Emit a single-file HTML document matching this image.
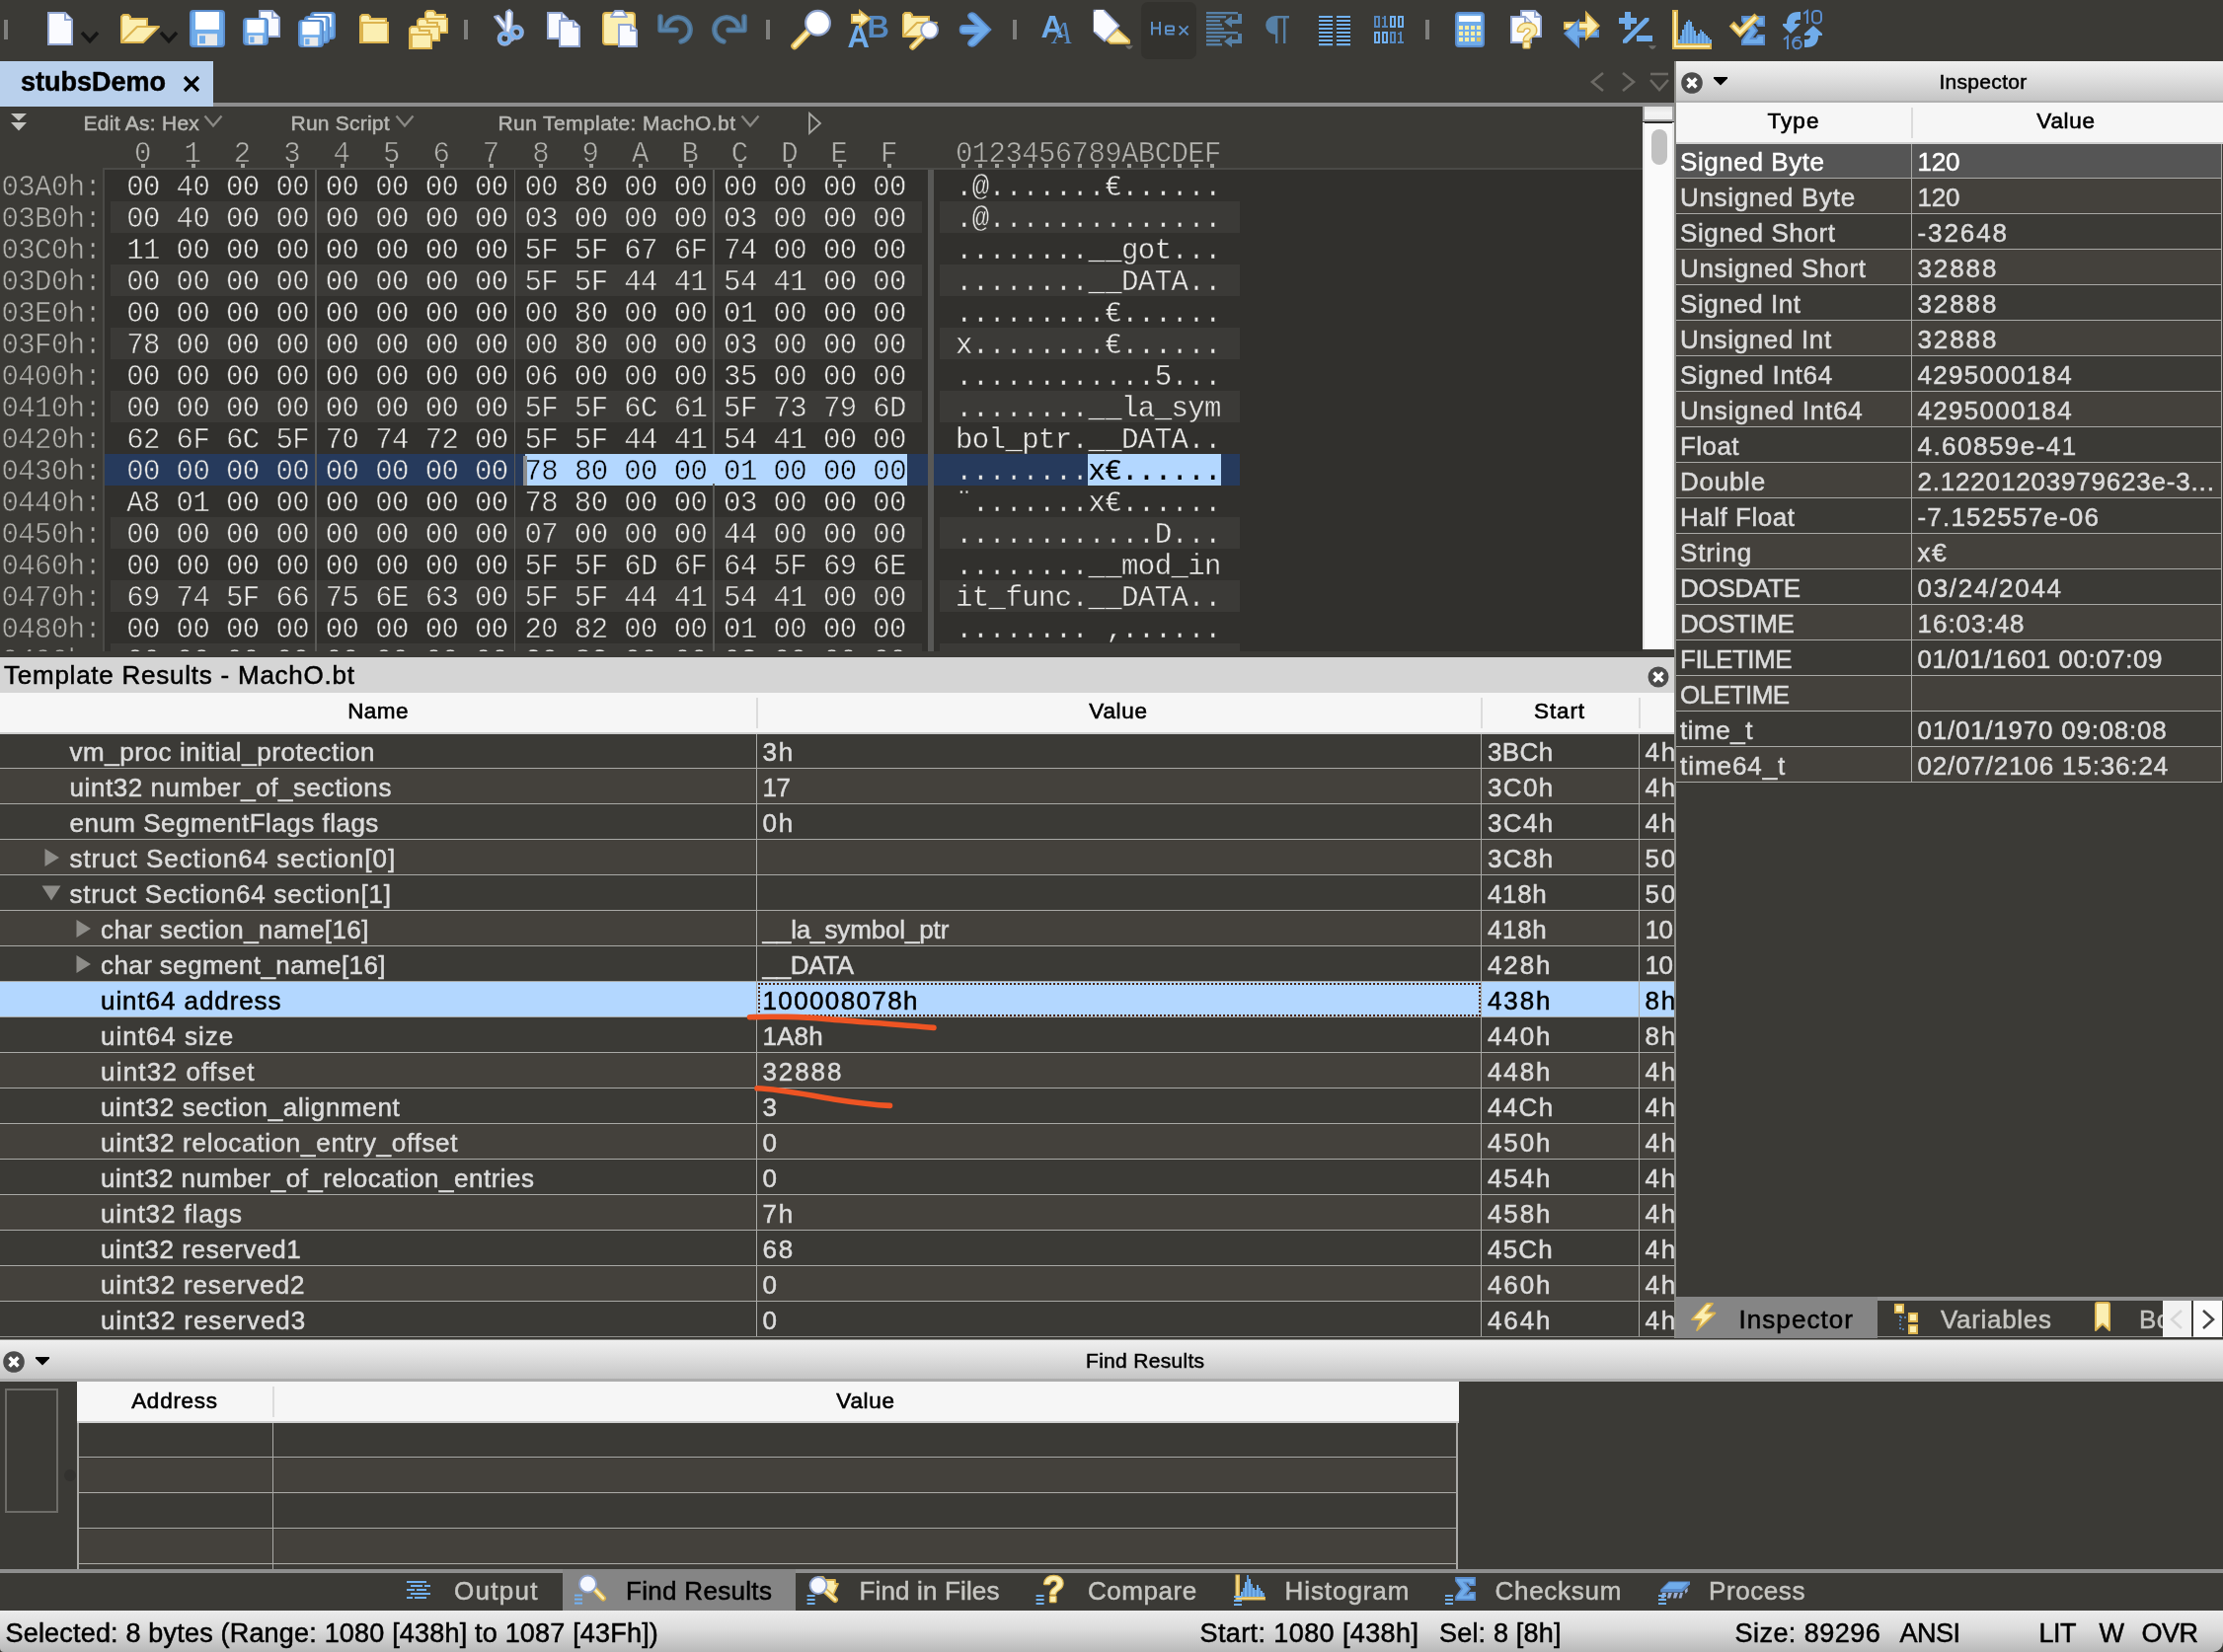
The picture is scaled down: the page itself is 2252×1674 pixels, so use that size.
<!DOCTYPE html><html><head><meta charset="utf-8"><title>010 Editor</title><style>
html,body{margin:0;padding:0}
html{width:2252px;height:1674px;overflow:hidden}
body{width:2252px;height:1674px;background:#3b3a36;overflow:hidden;position:relative;font-family:"Liberation Sans",sans-serif;font-size:26px;color:#dcdcdc}
div,span,svg{position:absolute;box-sizing:border-box}
.t{white-space:nowrap;letter-spacing:.5px;-webkit-text-stroke:.5px currentColor}
.v{letter-spacing:1.15px}
.m{font-family:"Liberation Mono",monospace;font-size:29px;letter-spacing:-.6px;white-space:pre;line-height:37px;height:32px}
.hx{color:#e8e8e6}
.ad{color:#b2b2ae}
.row{left:0;height:36px;line-height:36px}
.row .t{top:1px}
.ln{background:#a9a9a6}
.hd{background:#f6f6f6;color:#000}
.gr{background:linear-gradient(#efefef,#e2e2e2 35%,#c4c4c4)}
</style></head><body>
<div id="root" style="left:0;top:0;width:2252px;height:1674px;overflow:hidden;will-change:transform">
<svg style="left:0;top:0" width="2252" height="62" viewBox="0 0 2252 62">
<rect x="4" y="20" width="4" height="20" fill="#7f7f7d"/>
<path d="M49 13H66L73 20V45H49Z" fill="#fafbff" stroke="#93a7d2" stroke-width="2"/>
<path d="M66 13V20H73" fill="#eef1fa" stroke="#93a7d2" stroke-width="2"/>
<path d="M83 33L91 41.5L99 33" fill="none" stroke="#141414" stroke-width="3.6"/>
<path d="M123 43V17L125 15H130L132 17V19H149V27" fill="#fbefb2" stroke="#dcb44f" stroke-width="2"/>
<path d="M123 43L139 27H161L145 43Z" fill="#fbefb2" stroke="#dcb44f" stroke-width="2" stroke-linejoin="round"/>
<path d="M163 33L171 41.5L179 33" fill="none" stroke="#141414" stroke-width="3.6"/>
<rect x="193" y="11" width="34" height="36" rx="3" fill="#70acea" stroke="#5a8ccc" stroke-width="2"/>
<rect x="198.0" y="12" width="24.0" height="17.9" fill="#fff"/>
<rect x="200.0" y="34.3" width="20.0" height="11.8" fill="#e9e9e9"/>
<rect x="202.0" y="36.2" width="6.0" height="8.0" fill="#70acea"/>
<path d="M263 11H276L283 18V37H263Z" fill="#fafbff" stroke="#93a7d2" stroke-width="2"/>
<path d="M276 11V18H283" fill="#eef1fa" stroke="#93a7d2" stroke-width="2"/>
<rect x="247" y="19" width="24" height="26" rx="3" fill="#70acea" stroke="#5a8ccc" stroke-width="2"/>
<rect x="250.3" y="20" width="17.3" height="13.2" fill="#fff"/>
<rect x="251.8" y="35.9" width="14.4" height="8.7" fill="#e9e9e9"/>
<rect x="253.2" y="37.3" width="4.3" height="5.9" fill="#70acea"/>
<rect x="315" y="13" width="24" height="26" rx="3" fill="#70acea" stroke="#5a8ccc" stroke-width="2"/>
<rect x="318.3" y="14" width="17.3" height="13.2" fill="#fff"/>
<rect x="319.8" y="29.9" width="14.4" height="8.7" fill="#e9e9e9"/>
<rect x="321.2" y="31.3" width="4.3" height="5.9" fill="#70acea"/>
<rect x="309" y="17" width="24" height="26" rx="3" fill="#70acea" stroke="#5a8ccc" stroke-width="2"/>
<rect x="312.3" y="18" width="17.3" height="13.2" fill="#fff"/>
<rect x="313.8" y="33.9" width="14.4" height="8.7" fill="#e9e9e9"/>
<rect x="315.2" y="35.3" width="4.3" height="5.9" fill="#70acea"/>
<rect x="303" y="21" width="24" height="26" rx="3" fill="#70acea" stroke="#5a8ccc" stroke-width="2"/>
<rect x="306.3" y="22" width="17.3" height="13.2" fill="#fff"/>
<rect x="307.8" y="37.9" width="14.4" height="8.7" fill="#e9e9e9"/>
<rect x="309.2" y="39.3" width="4.3" height="5.9" fill="#70acea"/>
<path d="M365 43V17L367 15H373L375 17V19H391V23H393V43Z" fill="#fbefb2" stroke="#dcb44f" stroke-width="2"/>
<path d="M367 43V23H391" fill="none" stroke="#dcb44f" stroke-width="2"/>
<path d="M431 33V13L433 11H439L441 13V15H451V19H453V33Z" fill="#fbefb2" stroke="#dcb44f" stroke-width="2"/>
<path d="M433 33V19H451" fill="none" stroke="#dcb44f" stroke-width="2"/>
<path d="M423 41V21L425 19H431L433 21V23H443V27H445V41Z" fill="#fbefb2" stroke="#dcb44f" stroke-width="2"/>
<path d="M425 41V27H443" fill="none" stroke="#dcb44f" stroke-width="2"/>
<path d="M415 49V29L417 27H423L425 29V31H435V35H437V49Z" fill="#fbefb2" stroke="#dcb44f" stroke-width="2"/>
<path d="M417 49V35H435" fill="none" stroke="#dcb44f" stroke-width="2"/>
<rect x="470" y="20" width="4" height="20" fill="#7f7f7d"/>
<path d="M501 17L505 16L523 37L519 41Z" fill="#f6f8fd" stroke="#9aaed6" stroke-width="2" stroke-linejoin="round"/>
<path d="M513 12L516 10L519 13L518 35L512 36Z" fill="#f6f8fd" stroke="#9aaed6" stroke-width="2" stroke-linejoin="round"/>
<circle cx="511.3" cy="39" r="5.3" fill="none" stroke="#9aaed6" stroke-width="4.8"/><circle cx="511.3" cy="39" r="5.1" fill="none" stroke="#72b2f4" stroke-width="2.2"/>
<circle cx="523.2" cy="32.8" r="5.3" fill="none" stroke="#9aaed6" stroke-width="4.8"/><circle cx="523.2" cy="32.8" r="5.1" fill="none" stroke="#72b2f4" stroke-width="2.2"/>
<path d="M555 13H569L575 19V39H555Z" fill="#fafbff" stroke="#93a7d2" stroke-width="2"/>
<path d="M569 13V19H575" fill="#eef1fa" stroke="#93a7d2" stroke-width="2"/>
<path d="M567 21H581L587 27V47H567Z" fill="#fafbff" stroke="#93a7d2" stroke-width="2"/>
<path d="M581 21V27H587" fill="#eef1fa" stroke="#93a7d2" stroke-width="2"/>
<rect x="611" y="13" width="32" height="32" rx="3" fill="#fbefb2" stroke="#dcb44f" stroke-width="2"/>
<path d="M619 17L623 11H631L635 17Z" fill="#fafbff" stroke="#93a7d2" stroke-width="2" stroke-linejoin="round"/>
<path d="M627 25H639L645 31V47H627Z" fill="#fafbff" stroke="#93a7d2" stroke-width="2"/>
<path d="M639 25V31H645" fill="#eef1fa" stroke="#93a7d2" stroke-width="2"/>
<g fill="none" stroke="#4f7698" stroke-width="5.4" stroke-linecap="round" stroke-linejoin="round"><path d="M669 17V30.5H685"/><path d="M675 27A12.3 12.3 0 1 1 690 42"/></g>
<g fill="none" stroke="#5b86ad" stroke-width="2" stroke-linecap="round" stroke-linejoin="round"><path d="M669 17V30.5H685"/><path d="M675 27A12.3 12.3 0 1 1 690 42"/></g>
<g transform="translate(1479 0) scale(-1 1)" fill="none" stroke="#4f7698" stroke-width="5.4" stroke-linecap="round" stroke-linejoin="round"><path d="M725 17V30.5H741"/><path d="M731 27A12.3 12.3 0 1 1 746 42"/></g>
<g transform="translate(1479 0) scale(-1 1)" fill="none" stroke="#5b86ad" stroke-width="2" stroke-linecap="round" stroke-linejoin="round"><path d="M725 17V30.5H741"/><path d="M731 27A12.3 12.3 0 1 1 746 42"/></g>
<rect x="776" y="20" width="4" height="20" fill="#7f7f7d"/>
<path d="M818 33L805 46.5" stroke="#dcb44f" stroke-width="7.5" stroke-linecap="round"/><path d="M818 33L805 46.5" stroke="#fbefb2" stroke-width="3.6" stroke-linecap="round"/>
<circle cx="828.5" cy="23.3" r="12.4" fill="#fff" stroke="#8fa3cc" stroke-width="2.2"/>
<text x="878.5" y="37.5" font-family="Liberation Sans" font-weight="bold" font-size="31" fill="#5588c0">B</text>
<text x="858.5" y="48" font-family="Liberation Sans" font-weight="bold" font-size="31" fill="#70acea">A</text>
<path d="M863 15H871V11L881 19L871 27V23H863Z" fill="#fbefb2" stroke="#dcb44f" stroke-width="2" stroke-linejoin="miter"/>
<path d="M915 37V15L917 13H922L924 15V17H941V23" fill="#fbefb2" stroke="#dcb44f" stroke-width="2"/>
<path d="M915 37L929 23H949L935 37Z" fill="#fbefb2" stroke="#dcb44f" stroke-width="2" stroke-linejoin="round"/>
<path d="M934 38L924.5 47.5" stroke="#dcb44f" stroke-width="6.5" stroke-linecap="round"/><path d="M934 38L924.5 47.5" stroke="#fbefb2" stroke-width="2.8" stroke-linecap="round"/>
<circle cx="941.6" cy="30.4" r="8.4" fill="#fafbff" stroke="#8fa3cc" stroke-width="2"/>
<path d="M976 26H990L982 18.5Q979.5 15 983 13.5Q986 12.5 988.5 15L1003.5 30L988.5 45Q986 47.5 983 46.5Q979.5 45 982 41.5L990 34H976Q972.6 34 972.6 30Q972.6 26 976 26Z" fill="#70acea" stroke="#5a8ccc" stroke-width="1.8"/>
<rect x="1026" y="20" width="4" height="20" fill="#7f7f7d"/>
<text x="1054.6" y="37.8" font-family="Liberation Sans" font-weight="bold" font-size="32" fill="#70acea">A</text>
<text x="1066.5" y="43.7" font-family="Liberation Serif" font-style="italic" font-size="31" fill="#5588c0">A</text>
<path d="M1132 30L1144 41V43.7H1125L1121 40Z" fill="#fbefb2" stroke="#dcb44f" stroke-width="2" stroke-linejoin="round"/>
<path d="M1108.5 10.6H1118.5L1133.5 26L1119 41.5L1108.5 32Z" fill="#fafbff" stroke="#9aabd6" stroke-width="1.8"/>
<path d="M1108 10H1118V12H1108Z M1108 10V32H1110V10Z" fill="#fafbff"/>
<path d="M1140 46.2H1148L1146 49L1144 50L1142 49Z" fill="#6c6c6a"/>
<rect x="1156" y="2" width="56" height="58" rx="7" fill="#33322e"/>
<g fill="none" stroke="#5d90c8" stroke-width="2"><path d="M1167 22V35.6M1175 22V35.6M1167 28.6H1175"/><path d="M1181 31H1189V27.6Q1189 26.6 1188 26.6H1182Q1181 26.6 1181 27.6V33.6Q1181 34.6 1182 34.6H1189.5"/><path d="M1194.6 26.4L1203.6 35.4M1203.6 26.4L1194.6 35.4"/></g>
<g fill="#5680a6">
<rect x="1222" y="12" width="32" height="2.4"/>
<rect x="1222" y="16" width="20" height="2.4"/>
<rect x="1222" y="20" width="14" height="2.4"/>
<rect x="1222" y="24" width="16" height="2.4"/>
<rect x="1222" y="28" width="18" height="2.4"/>
<rect x="1222" y="32" width="32" height="2.4"/>
<rect x="1222" y="36" width="20" height="2.4"/>
<rect x="1222" y="40" width="14" height="2.4"/>
<rect x="1222" y="44" width="16" height="2.4"/>
<path d="M1254 14H1258V24H1248V28L1240 22L1248 16V20H1254Z"/>
<path d="M1254 34H1258V44H1248V48L1240 42L1248 36V40H1254Z"/>
</g>
<path d="M1292 16H1306V18.4H1302.4V44H1300V18.4H1294.4V44H1292V35A9.8 9.5 0 0 1 1292 16Z" fill="#5680a6"/>
<g fill="#72b2f4">
<rect x="1336" y="16" width="14" height="2.2"/><rect x="1354" y="16" width="14" height="2.2"/>
<rect x="1336" y="20" width="14" height="2.2"/><rect x="1354" y="20" width="14" height="2.2"/>
<rect x="1336" y="24" width="14" height="2.2"/><rect x="1354" y="24" width="14" height="2.2"/>
<rect x="1336" y="28" width="14" height="2.2"/><rect x="1354" y="28" width="14" height="2.2"/>
<rect x="1336" y="32" width="14" height="2.2"/><rect x="1354" y="32" width="14" height="2.2"/>
<rect x="1336" y="36" width="14" height="2.2"/><rect x="1354" y="36" width="14" height="2.2"/>
<rect x="1336" y="40" width="14" height="2.2"/><rect x="1354" y="40" width="14" height="2.2"/>
<rect x="1336" y="44" width="14" height="2.2"/><rect x="1354" y="44" width="14" height="2.2"/>
</g>
<g fill="#2b2622">
<rect x="1336" y="18.2" width="14" height="1.8"/><rect x="1354" y="18.2" width="14" height="1.8"/>
<rect x="1336" y="22.2" width="14" height="1.8"/><rect x="1354" y="22.2" width="14" height="1.8"/>
<rect x="1336" y="26.2" width="14" height="1.8"/><rect x="1354" y="26.2" width="14" height="1.8"/>
<rect x="1336" y="30.2" width="14" height="1.8"/><rect x="1354" y="30.2" width="14" height="1.8"/>
<rect x="1336" y="34.2" width="14" height="1.8"/><rect x="1354" y="34.2" width="14" height="1.8"/>
<rect x="1336" y="38.2" width="14" height="1.8"/><rect x="1354" y="38.2" width="14" height="1.8"/>
<rect x="1336" y="42.2" width="14" height="1.8"/><rect x="1354" y="42.2" width="14" height="1.8"/>
</g>
<rect x="1393" y="17" width="4" height="10" fill="none" stroke="#5588c0" stroke-width="2"/>
<path d="M1402 16H1404V26H1406V28H1400V26H1402V19H1400V17.5H1402Z" fill="#5588c0"/>
<rect x="1409" y="17" width="4" height="10" fill="none" stroke="#72b2f4" stroke-width="2"/>
<rect x="1417" y="17" width="4" height="10" fill="none" stroke="#72b2f4" stroke-width="2"/>
<rect x="1393" y="33" width="4" height="10" fill="none" stroke="#72b2f4" stroke-width="2"/>
<rect x="1401" y="33" width="4" height="10" fill="none" stroke="#72b2f4" stroke-width="2"/>
<rect x="1409" y="33" width="4" height="10" fill="none" stroke="#5588c0" stroke-width="2"/>
<path d="M1418 32H1420V42H1422V44H1416V42H1418V35H1416V33.5H1418Z" fill="#5588c0"/>
<rect x="1444" y="20" width="4" height="20" fill="#7f7f7d"/>
<rect x="1475" y="13" width="28" height="34" rx="3" fill="#70acea" stroke="#5a8ccc" stroke-width="2"/>
<rect x="1478" y="16" width="22" height="6" fill="#fff"/>
<rect x="1478" y="26" width="4" height="4" fill="#fbeea4"/>
<rect x="1484" y="26" width="4" height="4" fill="#fbeea4"/>
<rect x="1490" y="26" width="4" height="4" fill="#fbeea4"/>
<rect x="1496" y="26" width="4" height="4" fill="#fbeea4"/>
<rect x="1478" y="32" width="4" height="4" fill="#fbeea4"/>
<rect x="1484" y="32" width="4" height="4" fill="#fbeea4"/>
<rect x="1490" y="32" width="4" height="4" fill="#fbeea4"/>
<rect x="1496" y="32" width="4" height="4" fill="#fbeea4"/>
<rect x="1478" y="38" width="4" height="4" fill="#fbeea4"/>
<rect x="1484" y="38" width="4" height="4" fill="#fbeea4"/>
<rect x="1490" y="38" width="4" height="4" fill="#fbeea4"/>
<rect x="1496" y="38" width="4" height="4" fill="#d9c26a"/>
<path d="M1541 11H1555L1561 17V37H1541Z" fill="#fafbff" stroke="#93a7d2" stroke-width="2"/>
<path d="M1555 11V17H1561" fill="#eef1fa" stroke="#93a7d2" stroke-width="2"/>
<path d="M1531 17H1545L1551 23V43H1531Z" fill="#fafbff" stroke="#93a7d2" stroke-width="2"/>
<path d="M1545 17V23H1551" fill="#eef1fa" stroke="#93a7d2" stroke-width="2"/>
<text x="1536.4" y="48.2" font-family="Liberation Sans" font-weight="bold" font-size="35" fill="#dcb44f" stroke="#dcb44f" stroke-width="3.2" stroke-linejoin="round">?</text>
<text x="1536.4" y="48.2" font-family="Liberation Sans" font-weight="bold" font-size="35" fill="#fbefb2" stroke="#fbefb2" stroke-width="0.3">?</text>
<path d="M1585 23H1607V29H1585Z" fill="#fbefb2" stroke="#dcb44f" stroke-width="2" stroke-linejoin="miter"/>
<path d="M1599 31V21L1585.4 34L1599 47V37H1619V31Z" fill="#70acea" stroke="#5a8ccc" stroke-width="2" stroke-linejoin="miter"/>
<path d="M1600 23H1607V13L1619.6 26L1607 39V29H1600Z" fill="#fbefb2"/><path d="M1600 23H1607V13L1619.6 26L1607 39V29H1600" fill="none" stroke="#dcb44f" stroke-width="2" stroke-linejoin="miter"/>
<path d="M1646 12H1652V18H1658V24H1652V30H1646V24H1640V18H1646Z M1658 36H1674V42H1658Z M1666.5 18H1670.5V21L1648 43.7H1644V40.5Z" fill="#70acea"/>
<path d="M1670 46.2H1678L1676 49L1674 50L1672 49Z" fill="#6c6c6a"/>
<rect x="1700" y="40" width="2" height="4" fill="#74b2ee"/>
<rect x="1702" y="36" width="2" height="8" fill="#5e97d6"/>
<rect x="1704" y="30" width="2" height="14" fill="#74b2ee"/>
<rect x="1706" y="25" width="2" height="19" fill="#5e97d6"/>
<rect x="1708" y="22" width="2" height="22" fill="#74b2ee"/>
<rect x="1710" y="20" width="2" height="24" fill="#5e97d6"/>
<rect x="1712" y="22" width="2" height="22" fill="#74b2ee"/>
<rect x="1714" y="27" width="2" height="17" fill="#5e97d6"/>
<rect x="1716" y="31" width="2" height="13" fill="#74b2ee"/>
<rect x="1718" y="36" width="2" height="8" fill="#5e97d6"/>
<rect x="1720" y="34" width="2" height="10" fill="#74b2ee"/>
<rect x="1722" y="30" width="2" height="14" fill="#5e97d6"/>
<rect x="1724" y="32" width="2" height="12" fill="#74b2ee"/>
<rect x="1726" y="34" width="2" height="10" fill="#5e97d6"/>
<rect x="1728" y="36" width="2" height="8" fill="#74b2ee"/>
<rect x="1730" y="38" width="2" height="6" fill="#5e97d6"/>
<rect x="1732" y="40" width="2" height="4" fill="#74b2ee"/>
<path d="M1695 11H1699V45H1733V49H1695Z" fill="#fbefb2" stroke="#dcb44f" stroke-width="2"/>
<path d="M1765 17H1787V26H1781L1779 23H1774L1780 31L1774 39H1779L1781 36H1787V45H1765V41L1772 31L1765 21Z" fill="#70acea" stroke="#5a8ccc" stroke-width="2" stroke-linejoin="miter"/>
<path d="M1753 26.6L1756.6 23L1762.6 29.4L1777.4 14.8L1781 18.4L1762.6 36.6Z" fill="#fbefb2" stroke="#dcb44f" stroke-width="2" stroke-linejoin="miter"/>
<path d="M1824 12V20H1822Q1818 20 1818 24H1824L1814 34L1806 26V24H1810Q1810 12 1822 12Z" fill="#70acea"/>
<path d="M1828 48V40H1830Q1834 40 1834 36H1828V34L1837 26L1846 34V36H1842Q1842 48 1830 48Z" fill="#70acea"/>
<g fill="none" stroke="#5a8ccc" stroke-width="2"><path d="M1827 14L1831 11V24"/><rect x="1836" y="11" width="9" height="12.4" rx="3.6"/><path d="M1807 40L1811 37V50"/><path d="M1824 38Q1816 36.6 1816 44.5"/><circle cx="1820.6" cy="45" r="4.2"/></g>
</svg>

<div style="left:0;top:104px;width:1696px;height:4px;background:#8e8e8e"></div>
<div style="left:0;top:62px;width:216px;height:46px;background:#b9d0ec"></div>
<div class="t" style="left:21px;top:66px;font-weight:bold;font-size:27px;color:#000;line-height:34px;letter-spacing:0">stubsDemo</div>
<svg style="left:185px;top:76px" width="18" height="18" viewBox="0 0 18 18"><path d="M2 2L16 16M16 2L2 16" stroke="#000" stroke-width="3.2"/></svg>
<svg style="left:1608px;top:72px" width="90" height="24" viewBox="0 0 90 24"><g fill="none" stroke="#6c6a65" stroke-width="2.6"><path d="M16 2L5 11L16 20"/><path d="M36 2L47 11L36 20"/><path d="M64 3H82"/><path d="M64 9L73 19L82 9"/></g></svg>
<svg style="left:10px;top:114px" width="18" height="20" viewBox="0 0 18 20"><path d="M1 1H17L9 8.5Z M1 10H17L9 18.5Z" fill="#c4c4c0"/></svg>
<div class="t" style="left:84.5px;top:109px;line-height:32px;font-size:21px;color:#b8b8b4;letter-spacing:0.27px;">Edit As: Hex</div>
<svg style="left:205.5px;top:116px" width="20" height="14" viewBox="0 0 20 14"><path d="M1.5 1.5L10 11.5L18.5 1.5" fill="none" stroke="#8a8985" stroke-width="2.4"/></svg>
<div class="t" style="left:294.5px;top:109px;line-height:32px;font-size:21px;color:#b8b8b4;letter-spacing:0.23px;">Run Script</div>
<svg style="left:399.5px;top:116px" width="20" height="14" viewBox="0 0 20 14"><path d="M1.5 1.5L10 11.5L18.5 1.5" fill="none" stroke="#8a8985" stroke-width="2.4"/></svg>
<div class="t" style="left:504.5px;top:109px;line-height:32px;font-size:21px;color:#b8b8b4;letter-spacing:0.41px;">Run Template: MachO.bt</div>
<svg style="left:749.5px;top:116px" width="20" height="14" viewBox="0 0 20 14"><path d="M1.5 1.5L10 11.5L18.5 1.5" fill="none" stroke="#8a8985" stroke-width="2.4"/></svg>
<svg style="left:818px;top:113px" width="16" height="24" viewBox="0 0 16 24"><path d="M2 2L13 12L2 22Z" fill="none" stroke="#a8a8a4" stroke-width="1.8"/></svg>
<div id="hexwrap" style="left:0;top:140px;width:1664px;height:520px;overflow:hidden">
<div class="m ad" style="left:136.0px;top:-2px;-webkit-text-stroke:.55px #3b3a36">0</div>
<div class="m ad" style="left:186.4px;top:-2px;-webkit-text-stroke:.55px #3b3a36">1</div>
<div class="m ad" style="left:236.8px;top:-2px;-webkit-text-stroke:.55px #3b3a36">2</div>
<div class="m ad" style="left:287.2px;top:-2px;-webkit-text-stroke:.55px #3b3a36">3</div>
<div class="m ad" style="left:337.6px;top:-2px;-webkit-text-stroke:.55px #3b3a36">4</div>
<div class="m ad" style="left:388.0px;top:-2px;-webkit-text-stroke:.55px #3b3a36">5</div>
<div class="m ad" style="left:438.4px;top:-2px;-webkit-text-stroke:.55px #3b3a36">6</div>
<div class="m ad" style="left:488.8px;top:-2px;-webkit-text-stroke:.55px #3b3a36">7</div>
<div class="m ad" style="left:539.2px;top:-2px;-webkit-text-stroke:.55px #3b3a36">8</div>
<div class="m ad" style="left:589.6px;top:-2px;-webkit-text-stroke:.55px #3b3a36">9</div>
<div class="m ad" style="left:640.0px;top:-2px;-webkit-text-stroke:.55px #3b3a36">A</div>
<div class="m ad" style="left:690.4px;top:-2px;-webkit-text-stroke:.55px #3b3a36">B</div>
<div class="m ad" style="left:740.8px;top:-2px;-webkit-text-stroke:.55px #3b3a36">C</div>
<div class="m ad" style="left:791.2px;top:-2px;-webkit-text-stroke:.55px #3b3a36">D</div>
<div class="m ad" style="left:841.6px;top:-2px;-webkit-text-stroke:.55px #3b3a36">E</div>
<div class="m ad" style="left:892.0px;top:-2px;-webkit-text-stroke:.55px #3b3a36">F</div>
<div class="m ad" style="left:968px;top:-2px;-webkit-text-stroke:.55px #3b3a36">0123456789ABCDEF</div>
<div style="left:104px;top:32px;width:1560px;height:488px;background:#31302d"></div>
<div style="left:104px;top:29.5px;width:1560px;height:2.5px;background:#4a4a47"></div>
<div style="left:103.5px;top:30px;width:2.2px;height:490px;background:#4a4a47"></div>
<div style="left:143.2px;top:26px;width:4px;height:4px;background:#a4a4a0"></div>
<div style="left:974.4px;top:26px;width:4px;height:4px;background:#a4a4a0"></div>
<div style="left:193.6px;top:26px;width:4px;height:4px;background:#a4a4a0"></div>
<div style="left:991.2px;top:26px;width:4px;height:4px;background:#a4a4a0"></div>
<div style="left:244.0px;top:26px;width:4px;height:4px;background:#a4a4a0"></div>
<div style="left:1008.0px;top:26px;width:4px;height:4px;background:#a4a4a0"></div>
<div style="left:294.4px;top:26px;width:4px;height:4px;background:#a4a4a0"></div>
<div style="left:1024.8px;top:26px;width:4px;height:4px;background:#a4a4a0"></div>
<div style="left:344.8px;top:26px;width:4px;height:4px;background:#a4a4a0"></div>
<div style="left:1041.6px;top:26px;width:4px;height:4px;background:#a4a4a0"></div>
<div style="left:395.2px;top:26px;width:4px;height:4px;background:#a4a4a0"></div>
<div style="left:1058.4px;top:26px;width:4px;height:4px;background:#a4a4a0"></div>
<div style="left:445.6px;top:26px;width:4px;height:4px;background:#a4a4a0"></div>
<div style="left:1075.2px;top:26px;width:4px;height:4px;background:#a4a4a0"></div>
<div style="left:496.0px;top:26px;width:4px;height:4px;background:#a4a4a0"></div>
<div style="left:1092.0px;top:26px;width:4px;height:4px;background:#a4a4a0"></div>
<div style="left:546.4px;top:26px;width:4px;height:4px;background:#a4a4a0"></div>
<div style="left:1108.8px;top:26px;width:4px;height:4px;background:#a4a4a0"></div>
<div style="left:596.8px;top:26px;width:4px;height:4px;background:#a4a4a0"></div>
<div style="left:1125.6px;top:26px;width:4px;height:4px;background:#a4a4a0"></div>
<div style="left:647.2px;top:26px;width:4px;height:4px;background:#a4a4a0"></div>
<div style="left:1142.4px;top:26px;width:4px;height:4px;background:#a4a4a0"></div>
<div style="left:697.6px;top:26px;width:4px;height:4px;background:#a4a4a0"></div>
<div style="left:1159.2px;top:26px;width:4px;height:4px;background:#a4a4a0"></div>
<div style="left:748.0px;top:26px;width:4px;height:4px;background:#a4a4a0"></div>
<div style="left:1176.0px;top:26px;width:4px;height:4px;background:#a4a4a0"></div>
<div style="left:798.4px;top:26px;width:4px;height:4px;background:#a4a4a0"></div>
<div style="left:1192.8px;top:26px;width:4px;height:4px;background:#a4a4a0"></div>
<div style="left:848.8px;top:26px;width:4px;height:4px;background:#a4a4a0"></div>
<div style="left:1209.6px;top:26px;width:4px;height:4px;background:#a4a4a0"></div>
<div style="left:899.2px;top:26px;width:4px;height:4px;background:#a4a4a0"></div>
<div style="left:1226.4px;top:26px;width:4px;height:4px;background:#a4a4a0"></div>
<div class="m ad" style="left:1.5px;top:32px;-webkit-text-stroke:0.55px #3b3a36">03A0h:</div>
<div class="m hx" style="left:128.2px;top:32px;-webkit-text-stroke:0.55px #31302d">00 40 00 00 00 00 00 00 00 80 00 00 00 00 00 00</div>
<div class="m hx" style="left:968px;top:32px;-webkit-text-stroke:.35px #31302d">.@.......€......</div>
<div style="left:112px;top:64px;width:822px;height:32px;background:#3b3a37"></div>
<div style="left:952px;top:64px;width:304px;height:32px;background:#3b3a37"></div>
<div class="m ad" style="left:1.5px;top:64px;-webkit-text-stroke:0.55px #3b3a36">03B0h:</div>
<div class="m hx" style="left:128.2px;top:64px;-webkit-text-stroke:0.55px #3b3a37">00 40 00 00 00 00 00 00 03 00 00 00 03 00 00 00</div>
<div class="m hx" style="left:968px;top:64px;-webkit-text-stroke:.35px #3b3a37">.@..............</div>
<div class="m ad" style="left:1.5px;top:96px;-webkit-text-stroke:0.55px #3b3a36">03C0h:</div>
<div class="m hx" style="left:128.2px;top:96px;-webkit-text-stroke:0.55px #31302d">11 00 00 00 00 00 00 00 5F 5F 67 6F 74 00 00 00</div>
<div class="m hx" style="left:968px;top:96px;-webkit-text-stroke:.35px #31302d">........__got...</div>
<div style="left:112px;top:128px;width:822px;height:32px;background:#3b3a37"></div>
<div style="left:952px;top:128px;width:304px;height:32px;background:#3b3a37"></div>
<div class="m ad" style="left:1.5px;top:128px;-webkit-text-stroke:0.55px #3b3a36">03D0h:</div>
<div class="m hx" style="left:128.2px;top:128px;-webkit-text-stroke:0.55px #3b3a37">00 00 00 00 00 00 00 00 5F 5F 44 41 54 41 00 00</div>
<div class="m hx" style="left:968px;top:128px;-webkit-text-stroke:.35px #3b3a37">........__DATA..</div>
<div class="m ad" style="left:1.5px;top:160px;-webkit-text-stroke:0.55px #3b3a36">03E0h:</div>
<div class="m hx" style="left:128.2px;top:160px;-webkit-text-stroke:0.55px #31302d">00 00 00 00 00 00 00 00 00 80 00 00 01 00 00 00</div>
<div class="m hx" style="left:968px;top:160px;-webkit-text-stroke:.35px #31302d">.........€......</div>
<div style="left:112px;top:192px;width:822px;height:32px;background:#3b3a37"></div>
<div style="left:952px;top:192px;width:304px;height:32px;background:#3b3a37"></div>
<div class="m ad" style="left:1.5px;top:192px;-webkit-text-stroke:0.55px #3b3a36">03F0h:</div>
<div class="m hx" style="left:128.2px;top:192px;-webkit-text-stroke:0.55px #3b3a37">78 00 00 00 00 00 00 00 00 80 00 00 03 00 00 00</div>
<div class="m hx" style="left:968px;top:192px;-webkit-text-stroke:.35px #3b3a37">x........€......</div>
<div class="m ad" style="left:1.5px;top:224px;-webkit-text-stroke:0.55px #3b3a36">0400h:</div>
<div class="m hx" style="left:128.2px;top:224px;-webkit-text-stroke:0.55px #31302d">00 00 00 00 00 00 00 00 06 00 00 00 35 00 00 00</div>
<div class="m hx" style="left:968px;top:224px;-webkit-text-stroke:.35px #31302d">............5...</div>
<div style="left:112px;top:256px;width:822px;height:32px;background:#3b3a37"></div>
<div style="left:952px;top:256px;width:304px;height:32px;background:#3b3a37"></div>
<div class="m ad" style="left:1.5px;top:256px;-webkit-text-stroke:0.55px #3b3a36">0410h:</div>
<div class="m hx" style="left:128.2px;top:256px;-webkit-text-stroke:0.55px #3b3a37">00 00 00 00 00 00 00 00 5F 5F 6C 61 5F 73 79 6D</div>
<div class="m hx" style="left:968px;top:256px;-webkit-text-stroke:.35px #3b3a37">........__la_sym</div>
<div class="m ad" style="left:1.5px;top:288px;-webkit-text-stroke:0.55px #3b3a36">0420h:</div>
<div class="m hx" style="left:128.2px;top:288px;-webkit-text-stroke:0.55px #31302d">62 6F 6C 5F 70 74 72 00 5F 5F 44 41 54 41 00 00</div>
<div class="m hx" style="left:968px;top:288px;-webkit-text-stroke:.35px #31302d">bol_ptr.__DATA..</div>
<div style="left:106px;top:320px;width:1150px;height:32px;background:#263a5c"></div>
<div style="left:532px;top:320px;width:386.5px;height:32px;background:#b3d7ff"></div>
<div style="left:1102.4px;top:320px;width:134.6px;height:32px;background:#b3d7ff"></div>
<div style="left:530px;top:322px;width:4px;height:30px;background:#8c8c8c"></div>
<div class="m ad" style="left:1.5px;top:320px;-webkit-text-stroke:0.55px #3b3a36">0430h:</div>
<div class="m hx" style="left:128.2px;top:320px;-webkit-text-stroke:0.55px #263a5c">00 00 00 00 00 00 00 00 <span style="position:static;color:#000;-webkit-text-stroke:.5px #b3d7ff">78 80 00 00 01 00 00 00</span></div>
<div class="m hx" style="left:968px;top:320px;-webkit-text-stroke:.35px #263a5c">........<span style="position:static;color:#000;-webkit-text-stroke:.2px #000">x€......</span></div>
<div class="m ad" style="left:1.5px;top:352px;-webkit-text-stroke:0.55px #3b3a36">0440h:</div>
<div class="m hx" style="left:128.2px;top:352px;-webkit-text-stroke:0.55px #31302d">A8 01 00 00 00 00 00 00 78 80 00 00 03 00 00 00</div>
<div class="m hx" style="left:968px;top:352px;-webkit-text-stroke:.35px #31302d">¨.......x€......</div>
<div style="left:112px;top:384px;width:822px;height:32px;background:#3b3a37"></div>
<div style="left:952px;top:384px;width:304px;height:32px;background:#3b3a37"></div>
<div class="m ad" style="left:1.5px;top:384px;-webkit-text-stroke:0.55px #3b3a36">0450h:</div>
<div class="m hx" style="left:128.2px;top:384px;-webkit-text-stroke:0.55px #3b3a37">00 00 00 00 00 00 00 00 07 00 00 00 44 00 00 00</div>
<div class="m hx" style="left:968px;top:384px;-webkit-text-stroke:.35px #3b3a37">............D...</div>
<div class="m ad" style="left:1.5px;top:416px;-webkit-text-stroke:0.55px #3b3a36">0460h:</div>
<div class="m hx" style="left:128.2px;top:416px;-webkit-text-stroke:0.55px #31302d">00 00 00 00 00 00 00 00 5F 5F 6D 6F 64 5F 69 6E</div>
<div class="m hx" style="left:968px;top:416px;-webkit-text-stroke:.35px #31302d">........__mod_in</div>
<div style="left:112px;top:448px;width:822px;height:32px;background:#3b3a37"></div>
<div style="left:952px;top:448px;width:304px;height:32px;background:#3b3a37"></div>
<div class="m ad" style="left:1.5px;top:448px;-webkit-text-stroke:0.55px #3b3a36">0470h:</div>
<div class="m hx" style="left:128.2px;top:448px;-webkit-text-stroke:0.55px #3b3a37">69 74 5F 66 75 6E 63 00 5F 5F 44 41 54 41 00 00</div>
<div class="m hx" style="left:968px;top:448px;-webkit-text-stroke:.35px #3b3a37">it_func.__DATA..</div>
<div class="m ad" style="left:1.5px;top:480px;-webkit-text-stroke:0.55px #3b3a36">0480h:</div>
<div class="m hx" style="left:128.2px;top:480px;-webkit-text-stroke:0.55px #31302d">00 00 00 00 00 00 00 00 20 82 00 00 01 00 00 00</div>
<div class="m hx" style="left:968px;top:480px;-webkit-text-stroke:.35px #31302d">........ ‚......</div>
<div style="left:112px;top:512px;width:822px;height:32px;background:#3b3a37"></div>
<div style="left:952px;top:512px;width:304px;height:32px;background:#3b3a37"></div>
<div class="m ad" style="left:1.5px;top:512px;-webkit-text-stroke:0.55px #3b3a36">0490h:</div>
<div class="m hx" style="left:128.2px;top:512px;-webkit-text-stroke:0.55px #3b3a37">00 00 00 00 00 00 00 00 20 82 00 00 03 00 00 00</div>
<div class="m hx" style="left:968px;top:512px;-webkit-text-stroke:.35px #3b3a37">........ ‚......</div>
<div style="left:319.2px;top:32px;width:1.6px;height:488px;background:#5a5a57"></div>
<div style="left:520.6px;top:32px;width:1.6px;height:488px;background:#5a5a57"></div>
<div style="left:722.2px;top:32px;width:1.6px;height:488px;background:#5a5a57"></div>
<div style="left:721px;top:320px;width:4px;height:30px;background:#b3d7ff"></div>
<div style="left:940px;top:32px;width:6px;height:488px;background:#585856"></div>
</div>
<div style="left:1664px;top:108px;width:32px;height:550px;background:#fafafa"></div>
<div style="left:1664px;top:108px;width:32px;height:15px;background:linear-gradient(#e2e2e2,#f4f4f4 50%,#f0f0f0);border:2px solid #a8a8a8;border-top:none"></div>
<div style="left:1664px;top:123px;width:32px;height:2px;background:#2a2a28"></div>
<div style="left:1673px;top:131px;width:16px;height:36px;background:#c1c1c1;border-radius:8px"></div>
<div style="left:1664px;top:124px;width:1.5px;height:534px;background:#e4e4e4"></div>
<div style="left:1694px;top:124px;width:2px;height:534px;background:#e8e8e8"></div>
<div style="left:0;top:666px;width:1696px;height:36px;background:#d5d5d5"></div>
<div class="t" style="left:4px;top:666px;line-height:37px;color:#000;letter-spacing:0.76px;">Template Results - MachO.bt</div>
<svg style="left:1668.3px;top:674.3px" width="24" height="24" viewBox="0 0 24 24"><circle cx="12" cy="12" r="10.5" fill="#4c4c4c"/><path d="M7.5 7.5L16.5 16.5M16.5 7.5L7.5 16.5" stroke="#fff" stroke-width="3.4"/></svg>
<div class="hd" style="left:0;top:702px;width:1696px;height:41px"></div>
<div class="t" style="left:0px;width:766px;top:701px;line-height:40px;text-align:center;color:#000;font-size:22.5px;-webkit-text-stroke:.6px #000;letter-spacing:0.39px;">Name</div>
<div class="t" style="left:766px;width:734px;top:701px;line-height:40px;text-align:center;color:#000;font-size:22.5px;-webkit-text-stroke:.6px #000;letter-spacing:0.68px;">Value</div>
<div class="t" style="left:1500px;width:160px;top:701px;line-height:40px;text-align:center;color:#000;font-size:22.5px;-webkit-text-stroke:.6px #000;letter-spacing:0.87px;">Start</div>
<div style="left:766px;top:707px;width:2px;height:31px;background:#dcdcdc"></div>
<div style="left:1500px;top:707px;width:2px;height:31px;background:#dcdcdc"></div>
<div style="left:1660px;top:707px;width:2px;height:31px;background:#dcdcdc"></div>
<div style="left:0;top:743px;width:1696px;height:612px;overflow:hidden">
<div class="row" style="top:0px;width:1696px;background:#3b3a36;color:#dcdcdc">
<span class="t" style="left:70.5px;letter-spacing:0.57px;">vm_proc initial_protection</span>
<span class="t" style="left:772.5px;letter-spacing:1.9px;">3h</span>
<span class="t" style="left:1507px;letter-spacing:0.38px;">3BCh</span>
<span class="t" style="left:1666.5px;letter-spacing:1.9px;">4h</span>
</div>
<div class="ln" style="left:0;top:35px;width:1696px;height:1.3px"></div>
<div class="row" style="top:36px;width:1696px;background:#44413c;color:#dcdcdc">
<span class="t" style="left:70.5px;letter-spacing:0.57px;">uint32 number_of_sections</span>
<span class="t" style="left:772.5px;letter-spacing:-0.5px;">17</span>
<span class="t" style="left:1507px;letter-spacing:1.35px;">3C0h</span>
<span class="t" style="left:1666.5px;letter-spacing:1.9px;">4h</span>
</div>
<div class="ln" style="left:0;top:71px;width:1696px;height:1.3px"></div>
<div class="row" style="top:72px;width:1696px;background:#3b3a36;color:#dcdcdc">
<span class="t" style="left:70.5px;letter-spacing:0.49px;">enum SegmentFlags flags</span>
<span class="t" style="left:772.5px;letter-spacing:1.9px;">0h</span>
<span class="t" style="left:1507px;letter-spacing:1.35px;">3C4h</span>
<span class="t" style="left:1666.5px;letter-spacing:1.9px;">4h</span>
</div>
<div class="ln" style="left:0;top:107px;width:1696px;height:1.3px"></div>
<div class="row" style="top:108px;width:1696px;background:#44413c;color:#dcdcdc">
<svg style="left:45px;top:8px" width="16" height="20" viewBox="0 0 16 20"><path d="M0.5 1L15 10L0.5 19Z" fill="#8d8c88"/></svg>
<span class="t" style="left:70.5px;letter-spacing:0.95px;">struct Section64 section[0]</span>
<span class="t" style="left:772.5px;"></span>
<span class="t" style="left:1507px;letter-spacing:1.35px;">3C8h</span>
<span class="t" style="left:1666.5px;letter-spacing:1.9px;">50</span>
</div>
<div class="ln" style="left:0;top:143px;width:1696px;height:1.3px"></div>
<div class="row" style="top:144px;width:1696px;background:#3b3a36;color:#dcdcdc">
<svg style="left:42px;top:10px" width="20" height="16" viewBox="0 0 20 16"><path d="M0.5 0.5H19.5L10 15.5Z" fill="#8d8c88"/></svg>
<span class="t" style="left:70.5px;letter-spacing:0.79px;">struct Section64 section[1]</span>
<span class="t" style="left:772.5px;"></span>
<span class="t" style="left:1507px;letter-spacing:0.62px;">418h</span>
<span class="t" style="left:1666.5px;letter-spacing:1.9px;">50</span>
</div>
<div class="ln" style="left:0;top:179px;width:1696px;height:1.3px"></div>
<div class="row" style="top:180px;width:1696px;background:#44413c;color:#dcdcdc">
<svg style="left:77px;top:8px" width="16" height="20" viewBox="0 0 16 20"><path d="M0.5 1L15 10L0.5 19Z" fill="#8d8c88"/></svg>
<span class="t" style="left:102px;letter-spacing:0.42px;">char section_name[16]</span>
<span class="t" style="left:772.5px;letter-spacing:-0.14px;">__la_symbol_ptr</span>
<span class="t" style="left:1507px;letter-spacing:0.62px;">418h</span>
<span class="t" style="left:1666.5px;letter-spacing:-0.5px;">10</span>
</div>
<div class="ln" style="left:0;top:215px;width:1696px;height:1.3px"></div>
<div class="row" style="top:216px;width:1696px;background:#3b3a36;color:#dcdcdc">
<svg style="left:77px;top:8px" width="16" height="20" viewBox="0 0 16 20"><path d="M0.5 1L15 10L0.5 19Z" fill="#8d8c88"/></svg>
<span class="t" style="left:102px;letter-spacing:0.41px;">char segment_name[16]</span>
<span class="t" style="left:772.5px;letter-spacing:-0.36px;">__DATA</span>
<span class="t" style="left:1507px;letter-spacing:1.9px;">428h</span>
<span class="t" style="left:1666.5px;letter-spacing:-0.5px;">10</span>
</div>
<div class="ln" style="left:0;top:251px;width:1696px;height:1.3px"></div>
<div class="row" style="top:252px;width:1696px;background:#b3d7ff;color:#000">
<span class="t" style="left:102px;letter-spacing:0.92px;">uint64 address</span>
<span class="t" style="left:772.5px;letter-spacing:1.37px;">100008078h</span>
<span class="t" style="left:1507px;letter-spacing:1.9px;">438h</span>
<span class="t" style="left:1666.5px;letter-spacing:1.9px;">8h</span>
</div>
<div class="ln" style="left:0;top:287px;width:1696px;height:1.3px"></div>
<div class="row" style="top:288px;width:1696px;background:#3b3a36;color:#dcdcdc">
<span class="t" style="left:102px;letter-spacing:0.98px;">uint64 size</span>
<span class="t" style="left:772.5px;letter-spacing:0.16px;">1A8h</span>
<span class="t" style="left:1507px;letter-spacing:1.9px;">440h</span>
<span class="t" style="left:1666.5px;letter-spacing:1.9px;">8h</span>
</div>
<div class="ln" style="left:0;top:323px;width:1696px;height:1.3px"></div>
<div class="row" style="top:324px;width:1696px;background:#44413c;color:#dcdcdc">
<span class="t" style="left:102px;letter-spacing:1.2px;">uint32 offset</span>
<span class="t" style="left:772.5px;letter-spacing:1.9px;">32888</span>
<span class="t" style="left:1507px;letter-spacing:1.9px;">448h</span>
<span class="t" style="left:1666.5px;letter-spacing:1.9px;">4h</span>
</div>
<div class="ln" style="left:0;top:359px;width:1696px;height:1.3px"></div>
<div class="row" style="top:360px;width:1696px;background:#3b3a36;color:#dcdcdc">
<span class="t" style="left:102px;letter-spacing:0.66px;">uint32 section_alignment</span>
<span class="t" style="left:772.5px;">3</span>
<span class="t" style="left:1507px;letter-spacing:1.35px;">44Ch</span>
<span class="t" style="left:1666.5px;letter-spacing:1.9px;">4h</span>
</div>
<div class="ln" style="left:0;top:395px;width:1696px;height:1.3px"></div>
<div class="row" style="top:396px;width:1696px;background:#44413c;color:#dcdcdc">
<span class="t" style="left:102px;letter-spacing:0.72px;">uint32 relocation_entry_offset</span>
<span class="t" style="left:772.5px;">0</span>
<span class="t" style="left:1507px;letter-spacing:1.9px;">450h</span>
<span class="t" style="left:1666.5px;letter-spacing:1.9px;">4h</span>
</div>
<div class="ln" style="left:0;top:431px;width:1696px;height:1.3px"></div>
<div class="row" style="top:432px;width:1696px;background:#3b3a36;color:#dcdcdc">
<span class="t" style="left:102px;letter-spacing:0.5px;">uint32 number_of_relocation_entries</span>
<span class="t" style="left:772.5px;">0</span>
<span class="t" style="left:1507px;letter-spacing:1.9px;">454h</span>
<span class="t" style="left:1666.5px;letter-spacing:1.9px;">4h</span>
</div>
<div class="ln" style="left:0;top:467px;width:1696px;height:1.3px"></div>
<div class="row" style="top:468px;width:1696px;background:#44413c;color:#dcdcdc">
<span class="t" style="left:102px;letter-spacing:0.91px;">uint32 flags</span>
<span class="t" style="left:772.5px;letter-spacing:1.88px;">7h</span>
<span class="t" style="left:1507px;letter-spacing:1.9px;">458h</span>
<span class="t" style="left:1666.5px;letter-spacing:1.9px;">4h</span>
</div>
<div class="ln" style="left:0;top:503px;width:1696px;height:1.3px"></div>
<div class="row" style="top:504px;width:1696px;background:#3b3a36;color:#dcdcdc">
<span class="t" style="left:102px;letter-spacing:0.61px;">uint32 reserved1</span>
<span class="t" style="left:772.5px;letter-spacing:1.9px;">68</span>
<span class="t" style="left:1507px;letter-spacing:1.18px;">45Ch</span>
<span class="t" style="left:1666.5px;letter-spacing:1.9px;">4h</span>
</div>
<div class="ln" style="left:0;top:539px;width:1696px;height:1.3px"></div>
<div class="row" style="top:540px;width:1696px;background:#44413c;color:#dcdcdc">
<span class="t" style="left:102px;letter-spacing:0.85px;">uint32 reserved2</span>
<span class="t" style="left:772.5px;">0</span>
<span class="t" style="left:1507px;letter-spacing:1.9px;">460h</span>
<span class="t" style="left:1666.5px;letter-spacing:1.9px;">4h</span>
</div>
<div class="ln" style="left:0;top:575px;width:1696px;height:1.3px"></div>
<div class="row" style="top:576px;width:1696px;background:#3b3a36;color:#dcdcdc">
<span class="t" style="left:102px;letter-spacing:0.9px;">uint32 reserved3</span>
<span class="t" style="left:772.5px;">0</span>
<span class="t" style="left:1507px;letter-spacing:1.9px;">464h</span>
<span class="t" style="left:1666.5px;letter-spacing:1.9px;">4h</span>
</div>
<div class="ln" style="left:0;top:611px;width:1696px;height:1.3px"></div>
<div class="ln" style="left:766px;top:0;width:1.3px;height:612px;background:#a9a9a6"></div>
<div class="ln" style="left:1500px;top:0;width:1.3px;height:612px;background:#a9a9a6"></div>
<div class="ln" style="left:1660px;top:0;width:1.3px;height:612px;background:#a9a9a6"></div>
<div style="left:768px;top:253px;width:732px;height:34px;border:2px dotted #4a2412"></div>
</div>
<div style="left:0;top:742px;width:1696px;height:2px;background:#cfcfcf"></div>
<svg style="left:740px;top:1020px" width="240" height="120" viewBox="740 1020 240 120"><g fill="none" stroke="#ee5423" stroke-width="5.6" stroke-linecap="round"><path d="M759.5 1030.7C780 1029.6 815 1030.4 835 1032.4S910 1038 946 1041.4"/><path d="M767 1102.8C790 1103.6 820 1110 845 1113.9S885 1119.6 901.5 1120.4"/></g></svg>
<div style="left:0;top:1353.8px;width:2252px;height:1.4px;background:#8f8f8b"></div>
<div style="left:0;top:1356.6px;width:2252px;height:1.4px;background:#8f8f8b"></div>
<div style="left:1696.3px;top:62px;width:1.3px;height:1294px;background:#8c8c88"></div>
<div class="gr" style="left:1698px;top:62px;width:554px;height:41px"></div>
<div style="left:1698px;top:102px;width:554px;height:2px;background:#b0b0b0"></div>
<svg style="left:1702px;top:72px" width="24" height="24" viewBox="0 0 24 24"><circle cx="12" cy="12" r="10.8" fill="#4c4c4c"/><path d="M7.6 7.6L16.4 16.4M16.4 7.6L7.6 16.4" stroke="#fff" stroke-width="3.6"/></svg>
<svg style="left:1736px;top:78px" width="14" height="9" viewBox="0 0 14 9"><path d="M0 0H14V1.6L7 8.6L0 1.6Z" fill="#000"/></svg>
<div class="t" style="left:1698px;width:554px;top:63px;text-align:center;color:#000;font-size:21px;line-height:40px;letter-spacing:.3px;padding-left:68px">Inspector</div>
<div class="hd" style="left:1698px;top:104px;width:554px;height:41px"></div>
<div class="t" style="left:1698px;width:238px;top:103px;line-height:40px;text-align:center;color:#000;font-size:22.5px;-webkit-text-stroke:.6px #000;letter-spacing:1.04px;">Type</div>
<div class="t" style="left:1936px;width:314px;top:103px;line-height:40px;text-align:center;color:#000;font-size:22.5px;-webkit-text-stroke:.6px #000;letter-spacing:0.68px;">Value</div>
<div style="left:1936px;top:109px;width:2px;height:31px;background:#dcdcdc"></div>
<div class="row" style="left:1698px;top:145px;width:552px;background:#555555;color:#fff"><span class="t" style="left:4px;letter-spacing:0.58px;">Signed Byte</span><span class="t" style="left:244.5px;letter-spacing:-0.15px;">120</span></div>
<div class="ln" style="left:1698px;top:180px;width:552px;height:1.3px"></div>
<div class="row" style="left:1698px;top:181px;width:552px;background:#44413c;color:#dcdcdc"><span class="t" style="left:4px;letter-spacing:0.67px;">Unsigned Byte</span><span class="t" style="left:244.5px;letter-spacing:-0.15px;">120</span></div>
<div class="ln" style="left:1698px;top:216px;width:552px;height:1.3px"></div>
<div class="row" style="left:1698px;top:217px;width:552px;background:#3b3a36;color:#dcdcdc"><span class="t" style="left:4px;letter-spacing:0.6px;">Signed Short</span><span class="t" style="left:244.5px;letter-spacing:1.9px;">-32648</span></div>
<div class="ln" style="left:1698px;top:252px;width:552px;height:1.3px"></div>
<div class="row" style="left:1698px;top:253px;width:552px;background:#44413c;color:#dcdcdc"><span class="t" style="left:4px;letter-spacing:0.67px;">Unsigned Short</span><span class="t" style="left:244.5px;letter-spacing:1.9px;">32888</span></div>
<div class="ln" style="left:1698px;top:288px;width:552px;height:1.3px"></div>
<div class="row" style="left:1698px;top:289px;width:552px;background:#3b3a36;color:#dcdcdc"><span class="t" style="left:4px;letter-spacing:0.55px;">Signed Int</span><span class="t" style="left:244.5px;letter-spacing:1.9px;">32888</span></div>
<div class="ln" style="left:1698px;top:324px;width:552px;height:1.3px"></div>
<div class="row" style="left:1698px;top:325px;width:552px;background:#44413c;color:#dcdcdc"><span class="t" style="left:4px;letter-spacing:0.65px;">Unsigned Int</span><span class="t" style="left:244.5px;letter-spacing:1.9px;">32888</span></div>
<div class="ln" style="left:1698px;top:360px;width:552px;height:1.3px"></div>
<div class="row" style="left:1698px;top:361px;width:552px;background:#3b3a36;color:#dcdcdc"><span class="t" style="left:4px;letter-spacing:0.75px;">Signed Int64</span><span class="t" style="left:244.5px;letter-spacing:1.28px;">4295000184</span></div>
<div class="ln" style="left:1698px;top:396px;width:552px;height:1.3px"></div>
<div class="row" style="left:1698px;top:397px;width:552px;background:#44413c;color:#dcdcdc"><span class="t" style="left:4px;letter-spacing:0.75px;">Unsigned Int64</span><span class="t" style="left:244.5px;letter-spacing:1.28px;">4295000184</span></div>
<div class="ln" style="left:1698px;top:432px;width:552px;height:1.3px"></div>
<div class="row" style="left:1698px;top:433px;width:552px;background:#3b3a36;color:#dcdcdc"><span class="t" style="left:4px;letter-spacing:0.42px;">Float</span><span class="t" style="left:244.5px;letter-spacing:1.47px;">4.60859e-41</span></div>
<div class="ln" style="left:1698px;top:468px;width:552px;height:1.3px"></div>
<div class="row" style="left:1698px;top:469px;width:552px;background:#44413c;color:#dcdcdc"><span class="t" style="left:4px;letter-spacing:0.74px;">Double</span><span class="t" style="left:244.5px;letter-spacing:0.81px;">2.12201203979623e-3...</span></div>
<div class="ln" style="left:1698px;top:504px;width:552px;height:1.3px"></div>
<div class="row" style="left:1698px;top:505px;width:552px;background:#3b3a36;color:#dcdcdc"><span class="t" style="left:4px;letter-spacing:0.51px;">Half Float</span><span class="t" style="left:244.5px;letter-spacing:1.19px;">-7.152557e-06</span></div>
<div class="ln" style="left:1698px;top:540px;width:552px;height:1.3px"></div>
<div class="row" style="left:1698px;top:541px;width:552px;background:#44413c;color:#dcdcdc"><span class="t" style="left:4px;letter-spacing:0.86px;">String</span><span class="t" style="left:244.5px;letter-spacing:1.73px;">x€</span></div>
<div class="ln" style="left:1698px;top:576px;width:552px;height:1.3px"></div>
<div class="row" style="left:1698px;top:577px;width:552px;background:#3b3a36;color:#dcdcdc"><span class="t" style="left:4px;letter-spacing:-0.29px;">DOSDATE</span><span class="t" style="left:244.5px;letter-spacing:1.71px;">03/24/2044</span></div>
<div class="ln" style="left:1698px;top:612px;width:552px;height:1.3px"></div>
<div class="row" style="left:1698px;top:613px;width:552px;background:#44413c;color:#dcdcdc"><span class="t" style="left:4px;letter-spacing:-0.43px;">DOSTIME</span><span class="t" style="left:244.5px;letter-spacing:0.98px;">16:03:48</span></div>
<div class="ln" style="left:1698px;top:648px;width:552px;height:1.3px"></div>
<div class="row" style="left:1698px;top:649px;width:552px;background:#3b3a36;color:#dcdcdc"><span class="t" style="left:4px;letter-spacing:-0.5px;">FILETIME</span><span class="t" style="left:244.5px;letter-spacing:0.52px;">01/01/1601 00:07:09</span></div>
<div class="ln" style="left:1698px;top:684px;width:552px;height:1.3px"></div>
<div class="row" style="left:1698px;top:685px;width:552px;background:#44413c;color:#dcdcdc"><span class="t" style="left:4px;letter-spacing:-0.5px;">OLETIME</span><span class="t" style="left:244.5px;"></span></div>
<div class="ln" style="left:1698px;top:720px;width:552px;height:1.3px"></div>
<div class="row" style="left:1698px;top:721px;width:552px;background:#3b3a36;color:#dcdcdc"><span class="t" style="left:4px;letter-spacing:0.52px;">time_t</span><span class="t" style="left:244.5px;letter-spacing:0.76px;">01/01/1970 09:08:08</span></div>
<div class="ln" style="left:1698px;top:756px;width:552px;height:1.3px"></div>
<div class="row" style="left:1698px;top:757px;width:552px;background:#44413c;color:#dcdcdc"><span class="t" style="left:4px;letter-spacing:0.94px;">time64_t</span><span class="t" style="left:244.5px;letter-spacing:0.84px;">02/07/2106 15:36:24</span></div>
<div class="ln" style="left:1698px;top:792px;width:552px;height:1.3px"></div>
<div class="ln" style="left:1936.2px;top:145px;width:1.3px;height:648px;background:#a9a9a6"></div>
<div class="ln" style="left:2250px;top:145px;width:1.3px;height:648px;background:#a9a9a6"></div>
<div style="left:1698px;top:144px;width:554px;height:2px;background:#cfcfcf"></div>
<div style="left:1698px;top:1314px;width:554px;height:4px;background:#8e8e8e"></div>
<div style="left:1698px;top:1314px;width:204px;height:42px;background:#858585"></div>
<svg style="left:1698px;top:1314px" width="500" height="42" viewBox="0 0 500 42">
<path d="M31 7L16 23H25.5L21 34L39.5 16.5H29.5L37 7Z" fill="#fbefb2" stroke="#dcb44f" stroke-width="1.8" stroke-linejoin="round" transform="translate(0 0) skewX(0)"/>
<g fill="#fbefb2" stroke="#dcb44f" stroke-width="2"><rect x="222" y="8" width="8" height="8"/><rect x="236" y="17" width="8" height="8"/><rect x="236" y="29" width="8" height="8"/></g>
<path d="M227 19V33H233M227 21H233" fill="none" stroke="#5d90c8" stroke-width="1.6" stroke-dasharray="2 2"/>
<path d="M425 8Q425 6 427 6H437Q439 6 439 8V34L432 27.5L425 34Z" fill="#fbefb2" stroke="#dcb44f" stroke-width="2" stroke-linejoin="round"/>
</svg>

<div class="t" style="left:1761.5px;top:1318px;line-height:38px;color:#000;letter-spacing:1.06px;">Inspector</div>
<div class="t" style="left:1966px;top:1318px;line-height:38px;color:#c6c6c2;letter-spacing:0.69px;">Variables</div>
<div class="t" style="left:2167px;top:1318px;line-height:38px;color:#c4c4c0;letter-spacing:.5px">Bo</div>
<div style="left:2191px;top:1318px;width:29px;height:37px;background:#f1f1f1"></div>
<div style="left:2222px;top:1318px;width:29px;height:37px;background:#fbfbfb"></div>
<svg style="left:2191px;top:1318px" width="60" height="37" viewBox="0 0 60 37"><g fill="none" stroke-width="2.6"><path d="M19 10L9 19L19 28" stroke="#d6d6d6"/><path d="M41 10L51 19L41 28" stroke="#444"/></g></svg>
<div class="gr" style="left:0;top:1358px;width:2252px;height:40px"></div>
<div style="left:0;top:1397px;width:2252px;height:3px;background:#adadad"></div>
<svg style="left:2px;top:1368px" width="24" height="24" viewBox="0 0 24 24"><circle cx="12" cy="12" r="10.8" fill="#4c4c4c"/><path d="M7.6 7.6L16.4 16.4M16.4 7.6L7.6 16.4" stroke="#fff" stroke-width="3.6"/></svg>
<svg style="left:36px;top:1375px" width="14" height="9" viewBox="0 0 14 9"><path d="M0 0H14V1.6L7 8.6L0 1.6Z" fill="#000"/></svg>
<div class="t" style="left:1100px;top:1359px;color:#000;font-size:21px;line-height:40px;letter-spacing:.3px">Find Results</div>
<div style="left:5px;top:1407px;width:54px;height:126px;border:2px solid #6d6c68"></div>
<div style="left:65px;top:1489px;width:12px;height:12px;border-radius:6px;background:#33322f"></div>
<div class="hd" style="left:78px;top:1400px;width:1400px;height:42px;border-bottom:2px solid #cfcfcf"></div>
<div class="t" style="left:78px;width:198px;top:1400px;line-height:40px;text-align:center;color:#000;font-size:22.5px;-webkit-text-stroke:.6px #000;letter-spacing:0.74px;">Address</div>
<div class="t" style="left:276px;width:1202px;top:1400px;line-height:40px;text-align:center;color:#000;font-size:22.5px;-webkit-text-stroke:.6px #000;letter-spacing:0.68px;">Value</div>
<div style="left:276px;top:1405px;width:2px;height:31px;background:#dcdcdc"></div>
<div style="left:78px;top:1442px;width:1399px;height:148px;overflow:hidden">
<div style="left:0;top:0px;width:1399px;height:36px;background:#3b3a36"></div>
<div class="ln" style="left:0;top:34px;width:1399px;height:1.3px;background:#a9a9a6"></div>
<div style="left:0;top:36px;width:1399px;height:36px;background:#44413c"></div>
<div class="ln" style="left:0;top:70px;width:1399px;height:1.3px;background:#a9a9a6"></div>
<div style="left:0;top:72px;width:1399px;height:36px;background:#3b3a36"></div>
<div class="ln" style="left:0;top:106px;width:1399px;height:1.3px;background:#a9a9a6"></div>
<div style="left:0;top:108px;width:1399px;height:36px;background:#44413c"></div>
<div class="ln" style="left:0;top:142px;width:1399px;height:1.3px;background:#a9a9a6"></div>
<div style="left:0;top:144px;width:1399px;height:36px;background:#3b3a36"></div>
<div class="ln" style="left:0;top:178px;width:1399px;height:1.3px;background:#a9a9a6"></div>
<div class="ln" style="left:0;top:0;width:1.5px;height:148px;background:#a9a9a6"></div>
<div class="ln" style="left:197.7px;top:0;width:1.5px;height:148px;background:#a9a9a6"></div>
<div class="ln" style="left:1397px;top:0;width:1.5px;height:148px;background:#a9a9a6"></div>
</div>
<div style="left:0;top:1590px;width:2252px;height:4px;background:#8e8e8e"></div>
<div style="left:570px;top:1590px;width:236px;height:42px;background:#858585"></div>
<svg style="left:0;top:1590px" width="2252" height="42" viewBox="0 0 2252 42">
<g fill="#72b2f4"><rect x="412" y="12" width="20" height="2"/><rect x="430" y="16" width="6" height="2"/><rect x="416" y="16" width="12" height="2"/><rect x="412" y="20" width="8" height="2"/><rect x="422" y="20" width="10" height="2"/><rect x="416" y="24" width="20" height="2"/><rect x="412" y="28" width="6" height="2"/><rect x="420" y="28" width="12" height="2"/></g>
<path d="M602 20L611 29.5" stroke="#dcb44f" stroke-width="6" stroke-linecap="round"/><path d="M602 20L611 29.5" stroke="#fbefb2" stroke-width="2.6" stroke-linecap="round"/>
<circle cx="595.5" cy="15" r="8.6" fill="#f6f8ff" stroke="#8fa3cc" stroke-width="2"/>
<g fill="#72b2f4"><rect x="582" y="25.6" width="8" height="2"/><rect x="582" y="29.6" width="8" height="2"/><rect x="582" y="33.6" width="8" height="2"/></g>
<path d="M828 8H834L836 11H846V15H849L844 26H838" fill="#fbefb2" stroke="#dcb44f" stroke-width="1.8" stroke-linejoin="round"/>
<path d="M836 22L846 31" stroke="#dcb44f" stroke-width="6" stroke-linecap="round"/><path d="M836 22L846 31" stroke="#fbefb2" stroke-width="2.6" stroke-linecap="round"/>
<circle cx="829" cy="16.5" r="8.4" fill="#f6f8ff" stroke="#8fa3cc" stroke-width="2"/>
<g fill="#72b2f4"><rect x="817.6" y="26" width="8" height="2"/><rect x="817.6" y="30" width="8" height="2"/><rect x="817.6" y="34" width="8" height="2"/></g>
<text x="1056.4" y="33.4" font-family="Liberation Sans" font-weight="bold" font-size="36" fill="#dcb44f" stroke="#dcb44f" stroke-width="2.6" stroke-linejoin="round">?</text>
<text x="1056.4" y="33.4" font-family="Liberation Sans" font-weight="bold" font-size="36" fill="#fbefb2">?</text>
<g fill="#72b2f4"><rect x="1049.6" y="26" width="8" height="2"/><rect x="1049.6" y="30" width="8" height="2"/><rect x="1049.6" y="34" width="8" height="2"/></g>
<rect x="1257" y="23" width="2" height="5" fill="#74b2ee"/>
<rect x="1259" y="19" width="2" height="9" fill="#5e97d6"/>
<rect x="1261" y="13" width="2" height="15" fill="#74b2ee"/>
<rect x="1263" y="6" width="2" height="22" fill="#5e97d6"/>
<rect x="1265" y="10" width="2" height="18" fill="#74b2ee"/>
<rect x="1267" y="15" width="2" height="13" fill="#5e97d6"/>
<rect x="1269" y="19" width="2" height="9" fill="#74b2ee"/>
<rect x="1271" y="21" width="2" height="7" fill="#5e97d6"/>
<rect x="1273" y="16" width="2" height="12" fill="#74b2ee"/>
<rect x="1275" y="19" width="2" height="9" fill="#5e97d6"/>
<rect x="1277" y="22" width="2" height="6" fill="#74b2ee"/>
<rect x="1279" y="24" width="2" height="4" fill="#5e97d6"/>
<path d="M1251.5 5.5H1256V28H1282V31.5H1251.5Z" fill="#dcb44f"/>
<path d="M1252.6 6.5H1254.6V29H1281V30.3H1252.6Z" fill="#f3d98a"/>
<g fill="#72b2f4"><rect x="1250" y="27" width="8" height="2"/><rect x="1250" y="31" width="8" height="2"/><rect x="1250" y="35" width="8" height="2"/></g>
<path d="M1475 9H1494V16H1489L1487.6 13.6H1483.6L1489 20L1483.6 26.4H1487.6L1489 24H1494V31H1475V28L1481 20L1475 12Z" fill="#70acea" stroke="#5a8ccc" stroke-width="1.8"/>
<g fill="#72b2f4"><rect x="1464" y="26" width="8" height="2"/><rect x="1464" y="30" width="8" height="2"/><rect x="1464" y="34" width="8" height="2"/></g>
<path d="M1690.6 12.4H1712V15.2L1704 23.6H1682.2V20.8Z" fill="#5a8ccc"/>
<path d="M1691.6 13.4H1709.8L1703.4 20H1684.8Z" fill="#70acea"/>
<g fill="#9aaed4"><path d="M1684 24H1688L1686 29.6H1682.6Z"/><path d="M1690 24H1694L1692 29.6H1689Z"/><path d="M1696 24H1700L1698 29.6H1695Z"/><path d="M1702 24H1705L1703.4 29.6H1700.6Z"/><path d="M1706.6 21.6L1709.6 18.4V22.4L1707.6 25Z"/></g>
<g fill="#72b2f4"><rect x="1680" y="26" width="8" height="2"/><rect x="1680" y="30" width="8" height="2"/><rect x="1680" y="34" width="8" height="2"/></g>
</svg>

<div class="t" style="left:460px;top:1593px;line-height:38px;color:#c6c6c2;letter-spacing:1.29px;">Output</div>
<div class="t" style="left:634px;top:1593px;line-height:38px;color:#000;letter-spacing:0.31px;">Find Results</div>
<div class="t" style="left:870.5px;top:1593px;line-height:38px;color:#c6c6c2;letter-spacing:0.15px;">Find in Files</div>
<div class="t" style="left:1102px;top:1593px;line-height:38px;color:#c6c6c2;letter-spacing:0.54px;">Compare</div>
<div class="t" style="left:1301.5px;top:1593px;line-height:38px;color:#c6c6c2;letter-spacing:0.93px;">Histogram</div>
<div class="t" style="left:1514.5px;top:1593px;line-height:38px;color:#c6c6c2;letter-spacing:0.71px;">Checksum</div>
<div class="t" style="left:1731px;top:1593px;line-height:38px;color:#c6c6c2;letter-spacing:0.58px;">Process</div>
<div style="left:0;top:1632px;width:2252px;height:42px;background:linear-gradient(#ececec,#dcdcdc 45%,#b9b9b9);border-radius:0 0 10px 4px"></div>
<div class="t" style="left:5.5px;top:1636px;line-height:38px;color:#000;font-size:27px;letter-spacing:0.19px;">Selected: 8 bytes (Range: 1080 [438h] to 1087 [43Fh])</div>
<div class="t" style="left:1215.5px;top:1636px;line-height:38px;color:#000;font-size:27px;letter-spacing:0.4px;">Start: 1080 [438h]</div>
<div class="t" style="left:1458px;top:1636px;line-height:38px;color:#000;font-size:27px;letter-spacing:0.19px;">Sel: 8 [8h]</div>
<div class="t" style="left:1757.5px;top:1636px;line-height:38px;color:#000;font-size:27px;letter-spacing:0.46px;">Size: 89296</div>
<div class="t" style="left:1924.5px;top:1636px;line-height:38px;color:#000;font-size:27px;letter-spacing:-0.5px;">ANSI</div>
<div class="t" style="left:2065.5px;top:1636px;line-height:38px;color:#000;font-size:27px;letter-spacing:-0.5px;">LIT</div>
<div class="t" style="left:2126.5px;top:1636px;line-height:38px;color:#000;font-size:27px;">W</div>
<div class="t" style="left:2169.5px;top:1636px;line-height:38px;color:#000;font-size:27px;letter-spacing:-0.5px;">OVR</div>
</div></body></html>
